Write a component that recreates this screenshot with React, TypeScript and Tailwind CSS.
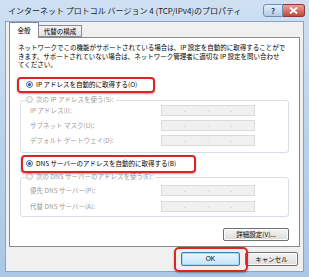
const jp = "font-['Noto_Sans_CJK_JP','Noto_Sans',sans-serif]";

function Radio({ checked, disabled }: { checked?: boolean; disabled?: boolean }) {
  return (
    <span
      className={`flex h-[7px] w-[7px] shrink-0 items-center justify-center rounded-full border ${
        disabled ? 'border-[#c4c4c4] bg-[#f4f4f4]' : 'border-[#4f6f8f] bg-[#e8eef4]'
      }`}
    >
      {checked && <span className="h-[3px] w-[3px] rounded-full bg-[#1e5a96]" />}
    </span>
  );
}

function IpBox() {
  return (
    <div className="flex h-[11px] w-[94px] items-center border border-[#dadada] bg-[#f0f0f0] text-[6px] leading-none text-[#a8a8a8]">
      <span className="flex-1" />
      <span>.</span>
      <span className="flex-1" />
      <span>.</span>
      <span className="flex-1" />
      <span>.</span>
      <span className="flex-1" />
    </div>
  );
}

function Field({ label }: { label: string }) {
  return (
    <div className="flex h-[11px] items-center pl-[9px]">
      <span className="w-[131px] text-[#9b9b9b]">{label}</span>
      <IpBox />
    </div>
  );
}

function WinButton({ children, primary }: { children: React.ReactNode; primary?: boolean }) {
  return (
    <button
      className={`flex h-full w-full items-center justify-center rounded-[2px] border text-[6.5px] leading-none text-black ${
        primary
          ? 'border-[#3c7fb1] bg-gradient-to-b from-[#eaf6fd] to-[#c4e5f8] shadow-[inset_0_0_0_1px_#a6d8f5]'
          : 'border-[#707070] bg-gradient-to-b from-[#f4f4f4] to-[#dcdcdc] shadow-[inset_0_0_0_1px_#fcfcfc]'
      }`}
    >
      {children}
    </button>
  );
}

export default function App() {
  return (
    <div
      className={`relative flex h-[277px] w-[309px] flex-col overflow-hidden bg-gradient-to-b from-[#cfe0f3] via-[#b9d2ec] to-[#aac7e6] ${jp} text-[6.5px] leading-none text-black`}
    >
      {/* タイトルバー */}
      <div className="flex h-[21px] shrink-0 items-center pl-[8px] pr-[4px]">
        <span className="flex-1 text-[8px] text-[#1a1a1a]">
          インターネット プロトコル バージョン 4 (TCP/IPv4)のプロパティ
        </span>
        <div className="flex h-[13px] items-stretch">
          <div className="flex w-[20px] items-center justify-center rounded-l-[3px] border border-[#6d8fb3] bg-gradient-to-b from-[#e4eef9] to-[#b3cbe6] text-[8px] font-bold text-[#2a4b70]">
            ?
          </div>
          <div className="flex w-[22px] items-center justify-center rounded-r-[3px] border border-l-0 border-[#8a3a32] bg-gradient-to-b from-[#e8a195] to-[#c4473a]">
            <svg width="9" height="7" viewBox="0 0 9 7">
              <path d="M1 0.5 L8 6.5 M8 0.5 L1 6.5" stroke="#ffffff" strokeWidth="1.8" />
            </svg>
          </div>
        </div>
      </div>

      {/* クライアント領域 */}
      <div className="mx-[5px] mb-[5px] flex flex-1 flex-col border border-[#8aa4c2] bg-[#f0f0f0] px-[3px] pb-[5px]">
        {/* タブ */}
        <div className="flex h-[15px] items-start">
          <div className="relative z-10 -mb-px flex h-[16px] w-[30px] items-center justify-center border border-b-0 border-[#898c95] bg-white">
            全般
          </div>
          <div className="mt-[3px] flex h-[12px] w-[43px] items-center justify-center border border-l-0 border-[#898c95] bg-gradient-to-b from-[#f2f2f2] to-[#e3e3e3]">
            代替の構成
          </div>
        </div>

        {/* パネル */}
        <div className="relative flex h-[210px] flex-col border border-[#898c95] bg-white">
          <p className="mt-[5px] pl-[8px] leading-[8.5px]">
            ネットワークでこの機能がサポートされている場合は、IP 設定を自動的に取得することがで
            <br />
            きます。サポートされていない場合は、ネットワーク管理者に適切な IP 設定を問い合わせ
            <br />
            てください。
          </p>

          <div className="mt-[11px] flex h-[10px] items-center gap-[3px] pl-[16px]">
            <Radio checked />
            <span>IP アドレスを自動的に取得する(O)</span>
          </div>

          <div className="mx-[10px] mt-[10px] flex flex-col gap-[4px] rounded-[3px] border border-[#d5dfe5] pb-[6px]">
            <div className="-mt-[6px] -mb-[4px] ml-[5px] flex h-[10px] w-fit items-center gap-[3px] bg-white pr-[2px]">
              <Radio disabled />
              <span className="text-[#9b9b9b]">次の IP アドレスを使う(S):</span>
            </div>
            <Field label="IP アドレス(I):" />
            <Field label="サブネット マスク(U):" />
            <Field label="デフォルト ゲートウェイ(D):" />
          </div>

          <div className="mt-[6px] flex h-[10px] items-center gap-[3px] pl-[16px]">
            <Radio checked />
            <span>DNS サーバーのアドレスを自動的に取得する(B)</span>
          </div>

          <div className="mx-[10px] mt-[8px] flex flex-col gap-[5px] rounded-[3px] border border-[#d5dfe5] pb-[4px]">
            <div className="-mt-[6px] -mb-[2px] ml-[5px] flex h-[10px] w-fit items-center gap-[3px] bg-white pr-[2px]">
              <Radio disabled />
              <span className="text-[#9b9b9b]">次の DNS サーバーのアドレスを使う(E):</span>
            </div>
            <Field label="優先 DNS サーバー(P):" />
            <Field label="代替 DNS サーバー(A):" />
          </div>

          <div className="mr-[10px] mt-auto mb-[5px] h-[13px] w-[66px] self-end">
            <WinButton>詳細設定(V)...</WinButton>
          </div>

          {/* 強調枠 */}
          <div className="pointer-events-none absolute left-[7px] top-[39px] h-[16px] w-[138px] rounded-[4px] border-2 border-[#dc2424] shadow-[0_1px_2px_rgba(0,0,0,0.35)]" />
          <div className="pointer-events-none absolute left-[11px] top-[117px] h-[18px] w-[175px] rounded-[4px] border-2 border-[#dc2424] shadow-[0_1px_2px_rgba(0,0,0,0.35)]" />
        </div>

        {/* ボタン */}
        <div className="mt-[5px] flex h-[14px] justify-end gap-[5px] pr-[2px]">
          <div className="w-[59px]">
            <WinButton primary>
              <span className="font-['Liberation_Sans',sans-serif]">OK</span>
            </WinButton>
          </div>
          <div className="w-[53px]">
            <WinButton>キャンセル</WinButton>
          </div>
        </div>
      </div>

      <div className="pointer-events-none absolute left-[174px] top-[247px] h-[25px] w-[74px] rounded-[5px] border-2 border-[#dc2424] shadow-[0_1px_2px_rgba(0,0,0,0.35)]" />
    </div>
  );
}
